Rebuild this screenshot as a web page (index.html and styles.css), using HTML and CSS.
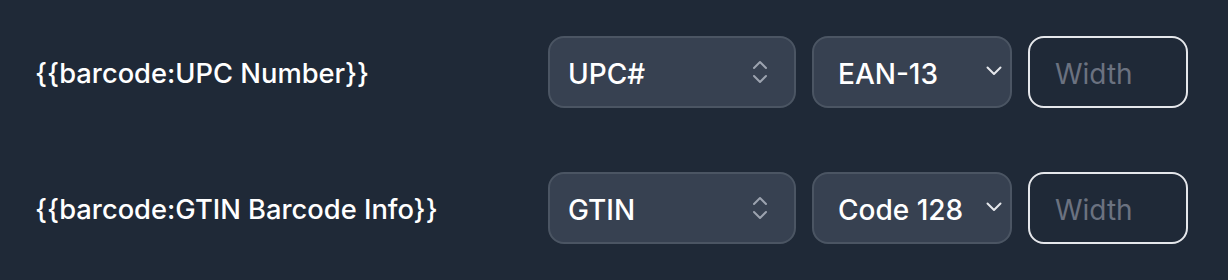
FILE: index.html
```html
<!DOCTYPE html>
<html lang="en">
  <head>
    <meta charset="UTF-8" />
    <meta name="viewport" content="width=device-width, initial-scale=1.0" />
    <title>Barcode fields</title>
    <link rel="stylesheet" href="styles.css">
  </head>
  <body>
    <div class="fields">
      <div class="field-row">
        <span class="field-label">{{barcode:UPC Number}}</span>
        <div class="controls">
          <div class="picker source">
            <span>UPC#</span>
            <svg class="updown" width="16" height="24" viewBox="0 0 16 24">
              <path d="M2 8 L8 2 L14 8" />
              <path d="M2 16 L8 22 L14 16" />
            </svg>
          </div>
          <div class="picker format">
            <span>EAN-13</span>
            <svg class="down" width="16" height="10" viewBox="0 0 16 10">
              <path d="M1.5 1.5 L8 8 L14.5 1.5" />
            </svg>
          </div>
          <input class="width-input" type="text" placeholder="Width" />
        </div>
      </div>
      <div class="field-row">
        <span class="field-label">{{barcode:GTIN Barcode Info}}</span>
        <div class="controls">
          <div class="picker source">
            <span>GTIN</span>
            <svg class="updown" width="16" height="24" viewBox="0 0 16 24">
              <path d="M2 8 L8 2 L14 8" />
              <path d="M2 16 L8 22 L14 16" />
            </svg>
          </div>
          <div class="picker format">
            <span>Code 128</span>
            <svg class="down" width="16" height="10" viewBox="0 0 16 10">
              <path d="M1.5 1.5 L8 8 L14.5 1.5" />
            </svg>
          </div>
          <input class="width-input" type="text" placeholder="Width" />
        </div>
      </div>
    </div>
  </body>
</html>
```

FILE: styles.css
```css
body {
  margin: 0;
  background-color: #1f2937;
  font-family: Inter, "Noto Sans", sans-serif;
  color: #ffffff;
}
.fields {
  display: flex;
  flex-direction: column;
  gap: 64px;
  padding: 36px 40px 0 35px;
}
.field-row {
  display: flex;
  justify-content: space-between;
  align-items: center;
  height: 72px;
}
.field-label {
  font-size: 27.3px;
  font-weight: 500;
  padding-top: 2px;
}
.controls {
  display: flex;
  gap: 16px;
  height: 72px;
}
.picker {
  display: flex;
  align-items: center;
  justify-content: space-between;
  box-sizing: border-box;
  height: 72px;
  background-color: #374151;
  border: 2px solid #4b5563;
  border-radius: 16px;
  font-size: 28px;
  font-weight: 500;
}
.picker span {
  padding-top: 3px;
}
.picker.source {
  width: 248px;
  padding: 0 26px 0 18px;
}
.picker.format {
  width: 200px;
  padding: 0 8px 0 24px;
}
.picker svg {
  fill: none;
  stroke-width: 2;
  stroke-linecap: round;
  stroke-linejoin: round;
}
.updown {
  stroke: #9ca3af;
}
.down {
  stroke: #e5e7eb;
  margin-top: -2px;
}
.width-input {
  box-sizing: border-box;
  width: 160px;
  height: 72px;
  background-color: #1f2937;
  border: 2px solid #e5e7eb;
  border-radius: 16px;
  padding: 3px 25px 0;
  font-family: Inter, "Noto Sans", sans-serif;
  font-size: 28px;
  color: #ffffff;
  outline: none;
}
.width-input::placeholder {
  color: #6b7280;
}
```
